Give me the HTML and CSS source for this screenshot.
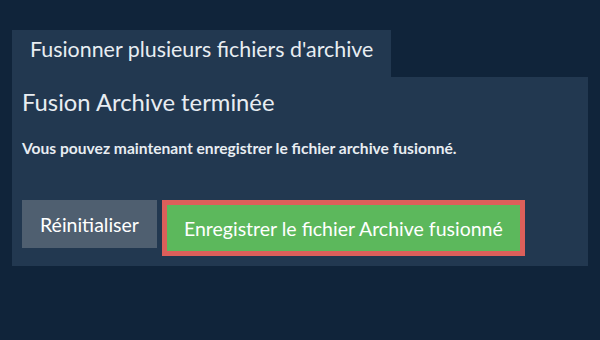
FILE: index.html
```html
<!DOCTYPE html>
<html lang="fr">
<head>
    <meta charset="UTF-8">
    <title>Fusionner plusieurs fichiers d'archive</title>
    <link rel="stylesheet" href="styles.css">
</head>
<body>
    <div class="wrap">
        <div class="tab">Fusionner plusieurs fichiers d'archive</div>
        <div class="panel">
            <h2>Fusion Archive terminée</h2>
            <p class="msg">Vous pouvez maintenant enregistrer le fichier archive fusionné.</p>
            <div class="actions">
                <button class="btn btn-reset">Réinitialiser</button>
                <span class="focus-ring">
                    <button class="btn btn-save">Enregistrer le fichier Archive fusionné</button>
                </span>
            </div>
        </div>
    </div>
</body>
</html>
```

FILE: styles.css
```css
body {
    margin: 0;
    background: #10243a;
    font-family: Lato, 'Open Sans', sans-serif;
    color: #e8edf2;
    width: 600px;
    height: 340px;
}

.wrap {
    padding: 30px 12px 0 12px;
}

.tab {
    display: inline-block;
    background: #223850;
    font-size: 21.4px;
    line-height: 38px;
    height: 38px;
    padding: 0 18px 9px 18px;
}

.panel {
    background: #223850;
    padding: 10.5px 10px 10px 10px;
}

.panel h2 {
    margin: 0;
    font-weight: normal;
    font-size: 23.8px;
    line-height: 28px;
}

.msg {
    margin: 23.5px 0 0 0;
    font-size: 15.6px;
    font-weight: bold;
    line-height: 18px;
}

.actions {
    display: flex;
    align-items: flex-start;
    gap: 5px;
    margin-top: 43px;
}

.btn {
    font-family: Lato, 'Open Sans', sans-serif;
    font-size: 19.5px;
    color: #ffffff;
    border: none;
    height: 48px;
    padding: 0 18px;
    cursor: pointer;
}

.btn-reset {
    background: #4f5f70;
}

.focus-ring {
    display: block;
    border: 5px solid #dc5f5a;
}

.btn-save {
    display: block;
    background: #5cb85c;
    height: 46px;
    padding: 0 17px;
}
```
